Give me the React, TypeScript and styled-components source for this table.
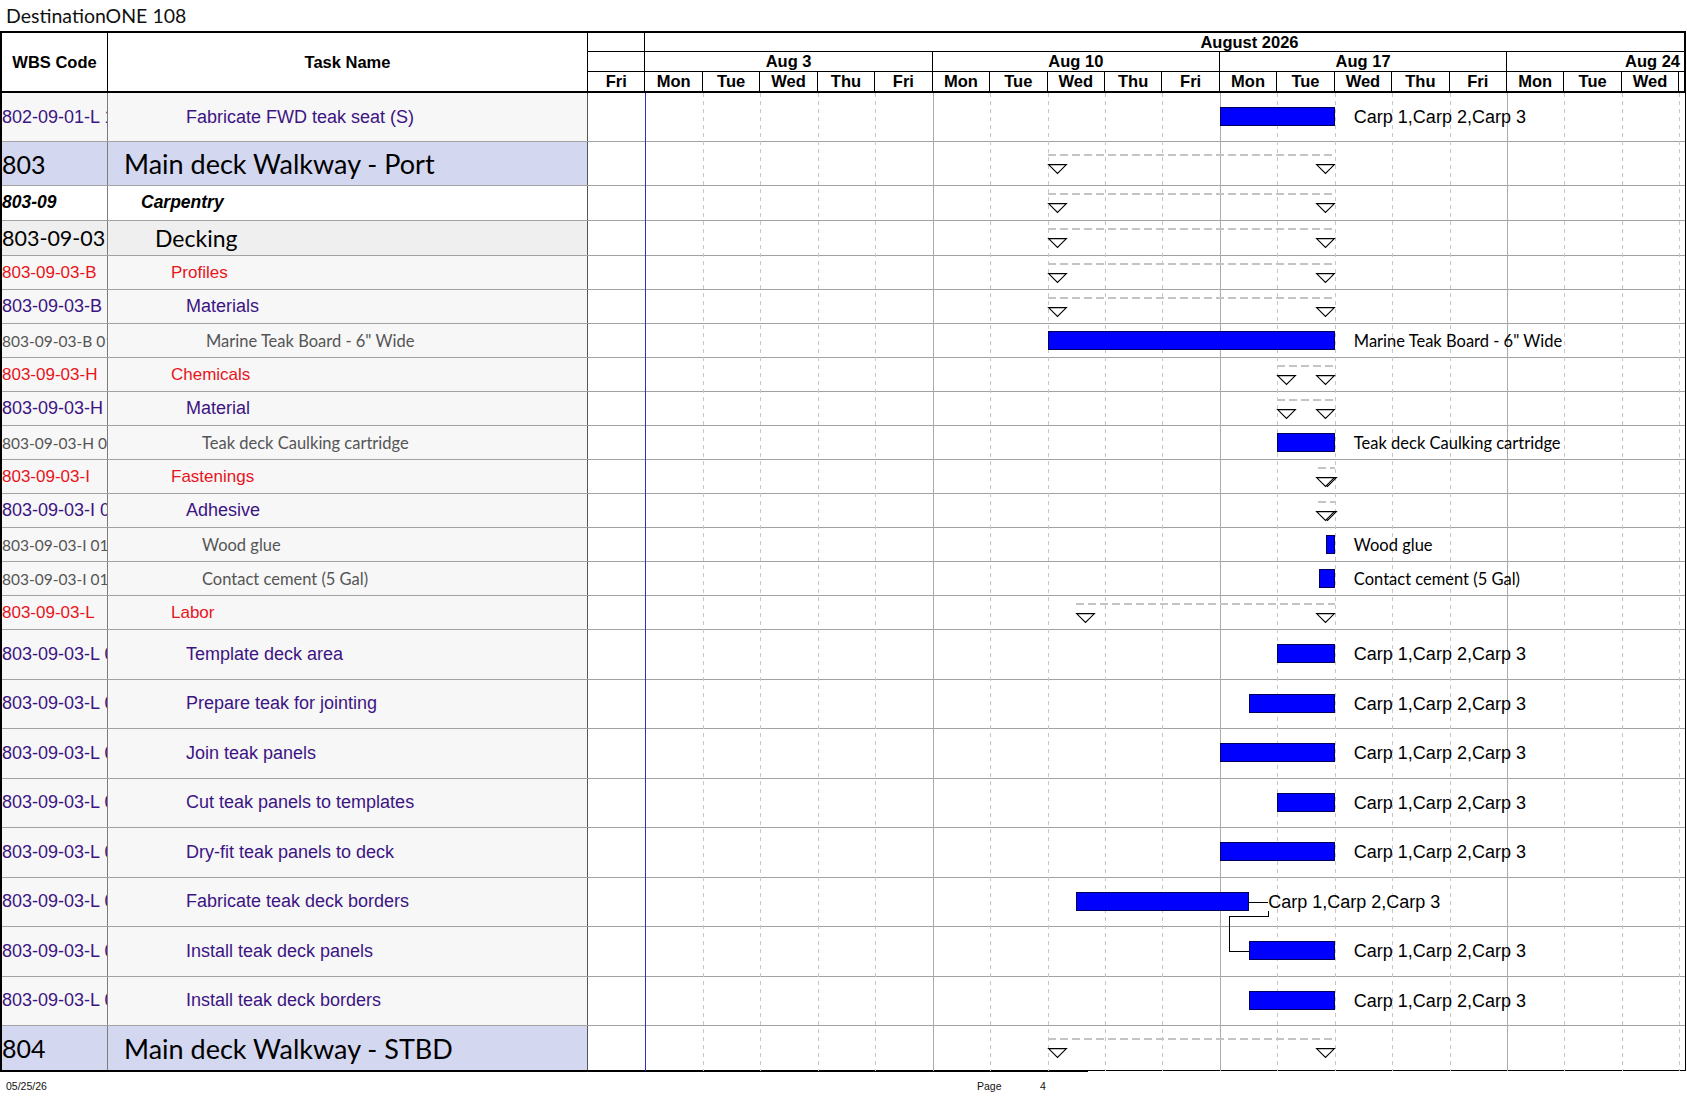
import React from 'react'
import styled, { createGlobalStyle } from 'styled-components'

const DAY = 57.45
const x = (d: number) => d * DAY

const GlobalStyle = createGlobalStyle`
  html, body {
    margin: 0;
    padding: 0;
    background: #fff;
  }
  body {
    width: 1687px;
    height: 1097px;
    overflow: hidden;
    font-family: 'Liberation Sans', Arial, sans-serif;
    color: #000;
  }
  * {
    box-sizing: border-box;
  }
`

const Page = styled.div`
  display: flex;
  flex-direction: column;
  width: 1687px;
`

const Title = styled.div`
  display: flex;
  align-items: center;
  height: 31px;
  padding-left: 6px;
  font-family: Lato, 'Noto Sans', sans-serif;
  font-size: 19.5px;
  color: #111;
`

const Table = styled.div`
  width: 1686px;
  border-top: 2px solid #000;
  border-left: 2px solid #000;
  border-right: 1px solid #000;
`

const Header = styled.div`
  display: flex;
  height: 60px;
  border-bottom: 2px solid #000;
`

const ColHead = styled.div<{ $w: number }>`
  display: flex;
  align-items: center;
  justify-content: center;
  width: ${p => p.$w}px;
  flex: none;
  border-right: 1px solid #000;
  font-weight: bold;
  font-size: 16.5px;
`

const GanttHead = styled.div`
  flex: 1;
  display: flex;
  flex-direction: column;
  overflow: hidden;
`

const Tier = styled.div<{ $h: number; $last?: boolean }>`
  display: flex;
  flex: none;
  height: ${p => p.$h}px;
  border-bottom: ${p => (p.$last ? 'none' : '1px solid #000')};
`

const TierCell = styled.div<{ $w?: number; $end?: boolean; $pad?: number }>`
  display: flex;
  align-items: center;
  justify-content: ${p => (p.$end ? 'flex-end' : p.$pad ? 'flex-start' : 'center')};
  flex: ${p => (p.$w ? 'none' : '1')};
  width: ${p => (p.$w ? `${p.$w}px` : 'auto')};
  padding: 0 ${p => (p.$end ? 4 : 0)}px 0 ${p => p.$pad ?? 0}px;
  border-right: 1px solid #000;
  font-weight: bold;
  font-size: 16.5px;
  white-space: nowrap;
`

const Body = styled.div`
  position: relative;
`

const DayGrid = styled.div`
  position: absolute;
  top: 0;
  bottom: 0;
  left: 586px;
  right: 0;
  display: flex;
  overflow: hidden;
  pointer-events: none;
`

type LineKind = 'none' | 'status' | 'week' | 'dash'

const DayColumn = styled.div<{ $kind: LineKind }>`
  flex: none;
  width: ${DAY}px;
  height: 100%;
  border-left: ${p =>
    p.$kind === 'status'
      ? '1px solid #2f2fb8'
      : p.$kind === 'week'
        ? '1px solid #ababab'
        : 'none'};
  background-image: ${p =>
    p.$kind === 'dash' ? 'linear-gradient(to bottom, #c6c6c6 50%, transparent 50%)' : 'none'};
  background-size: 1px 8px;
  background-repeat: repeat-y;
`

type RowKind = 'task' | 'section' | 'group' | 'sub' | 'cat' | 'item'

const rowBg: Record<RowKind, string> = {
  task: '#f7f7f7',
  section: '#d3d7ef',
  group: '#ffffff',
  sub: '#efefef',
  cat: '#f7f7f7',
  item: '#f7f7f7',
}

const Row = styled.div<{ $h: number; $last?: boolean }>`
  display: flex;
  height: ${p => p.$h}px;
  border-bottom: 1px solid ${p => (p.$last ? '#000' : '#a2a2a2')};
`

const textStyle = (kind: RowKind) => {
  switch (kind) {
    case 'section':
      return `font-family: Lato, 'Noto Sans', sans-serif; font-size: 27px; color: #000;`
    case 'sub':
      return `font-family: Lato, 'Noto Sans', sans-serif; font-size: 23px; color: #000;`
    case 'group':
      return `font-weight: bold; font-style: italic; font-size: 17.5px; color: #000;`
    case 'cat':
      return `font-size: 17px; color: #e8141c;`
    case 'item':
      return `font-family: Lato, 'Noto Sans', sans-serif; font-size: 16.5px; color: #555;`
    default:
      return `font-size: 18px; color: #3c1483;`
  }
}

const wbsSize: Partial<Record<RowKind, string>> = {
  section: '25px',
  sub: '21.5px',
  item: '15.5px',
}

const WbsCell = styled.div<{ $kind: RowKind }>`
  display: flex;
  align-items: center;
  flex: none;
  width: 106px;
  border-right: 1px solid #7c7c7c;
  background: ${p => rowBg[p.$kind]};
  white-space: nowrap;
  overflow: hidden;
  ${p => textStyle(p.$kind)}
  ${p => (wbsSize[p.$kind] ? `font-size: ${wbsSize[p.$kind]};` : '')}
`

const TaskCell = styled.div<{ $kind: RowKind; $indent: number }>`
  display: flex;
  align-items: center;
  flex: none;
  width: 480px;
  padding-left: ${p => p.$indent}px;
  border-right: 1px solid #555;
  background: ${p => rowBg[p.$kind]};
  white-space: nowrap;
  overflow: hidden;
  ${p => textStyle(p.$kind)}
`

const GanttCell = styled.div`
  position: relative;
  flex: 1;
`

const Bar = styled.div<{ $left: number; $width: number }>`
  position: absolute;
  top: 50%;
  left: ${p => p.$left}px;
  width: ${p => p.$width}px;
  height: 19px;
  margin-top: -10px;
  background: #0000ff;
  border: 1px solid #00005a;
`

const BarLabel = styled.span<{ $left: number; $font: 'arial' | 'lato' }>`
  position: absolute;
  top: 50%;
  left: ${p => p.$left}px;
  transform: translateY(-50%);
  white-space: nowrap;
  font-family: ${p => (p.$font === 'lato' ? "Lato, 'Noto Sans', sans-serif" : "'Liberation Sans', Arial, sans-serif")};
  font-size: ${p => (p.$font === 'lato' ? '16.5px' : '18px')};
  color: #000;
`

const SumLine = styled.div<{ $left: number; $width: number }>`
  position: absolute;
  top: calc(50% - 10px);
  left: ${p => p.$left}px;
  width: ${p => p.$width}px;
  height: 2px;
  background: repeating-linear-gradient(to right, #c4c4c4 0 8px, transparent 8px 12px);
`

const Tri = styled.svg<{ $left: number }>`
  position: absolute;
  top: 50%;
  left: ${p => p.$left}px;
  width: 19px;
  height: 10px;
  overflow: visible;
`

const LinkLayer = styled.svg`
  position: absolute;
  top: 0;
  left: 0;
  width: 100%;
  height: 80px;
  overflow: visible;
  pointer-events: none;
`

const BottomRule = styled.div`
  width: 1088px;
  height: 1px;
  background: #000;
`

const Footer = styled.div`
  display: grid;
  grid-template-columns: 971px 63px auto;
  padding: 8px 0 0 6px;
  font-size: 10.5px;
  line-height: 12px;
  color: #111;
`

type Gantt =
  | { type: 'bar'; from: number; to: number; label?: string; font?: 'arial' | 'lato'; linked?: boolean }
  | { type: 'sum'; from: number; to: number }

interface RowData {
  wbs: string
  name: string
  kind: RowKind
  indent: number
  h: number
  gantt: Gantt
}

const CARP = 'Carp 1,Carp 2,Carp 3'

const rows: RowData[] = [
  { wbs: '802-09-01-L 10', name: 'Fabricate FWD teak seat (S)', kind: 'task', indent: 78, h: 49, gantt: { type: 'bar', from: 11, to: 13, label: CARP } },
  { wbs: '803', name: 'Main deck Walkway - Port', kind: 'section', indent: 16, h: 44, gantt: { type: 'sum', from: 8, to: 13 } },
  { wbs: '803-09', name: 'Carpentry', kind: 'group', indent: 33, h: 34.5, gantt: { type: 'sum', from: 8, to: 13 } },
  { wbs: '803-09-03', name: 'Decking', kind: 'sub', indent: 47, h: 35.5, gantt: { type: 'sum', from: 8, to: 13 } },
  { wbs: '803-09-03-B', name: 'Profiles', kind: 'cat', indent: 63, h: 34, gantt: { type: 'sum', from: 8, to: 13 } },
  { wbs: '803-09-03-B 01', name: 'Materials', kind: 'task', indent: 78, h: 34, gantt: { type: 'sum', from: 8, to: 13 } },
  { wbs: '803-09-03-B 01-01', name: 'Marine Teak Board - 6" Wide', kind: 'item', indent: 98, h: 34, gantt: { type: 'bar', from: 8, to: 13, label: 'Marine Teak Board - 6" Wide', font: 'lato' } },
  { wbs: '803-09-03-H', name: 'Chemicals', kind: 'cat', indent: 63, h: 34, gantt: { type: 'sum', from: 12, to: 13 } },
  { wbs: '803-09-03-H 01', name: 'Material', kind: 'task', indent: 78, h: 34, gantt: { type: 'sum', from: 12, to: 13 } },
  { wbs: '803-09-03-H 01-01', name: 'Teak deck Caulking cartridge', kind: 'item', indent: 94, h: 34, gantt: { type: 'bar', from: 12, to: 13, label: 'Teak deck Caulking cartridge', font: 'lato' } },
  { wbs: '803-09-03-I', name: 'Fastenings', kind: 'cat', indent: 63, h: 34, gantt: { type: 'sum', from: 12.71, to: 13 } },
  { wbs: '803-09-03-I 01', name: 'Adhesive', kind: 'task', indent: 78, h: 34, gantt: { type: 'sum', from: 12.71, to: 13 } },
  { wbs: '803-09-03-I 01-01', name: 'Wood glue', kind: 'item', indent: 94, h: 34, gantt: { type: 'bar', from: 12.84, to: 13, label: 'Wood glue', font: 'lato' } },
  { wbs: '803-09-03-I 01-02', name: 'Contact cement (5 Gal)', kind: 'item', indent: 94, h: 34, gantt: { type: 'bar', from: 12.72, to: 13, label: 'Contact cement (5 Gal)', font: 'lato' } },
  { wbs: '803-09-03-L', name: 'Labor', kind: 'cat', indent: 63, h: 34, gantt: { type: 'sum', from: 8.5, to: 13 } },
  { wbs: '803-09-03-L 01', name: 'Template deck area', kind: 'task', indent: 78, h: 49.5, gantt: { type: 'bar', from: 12, to: 13, label: CARP } },
  { wbs: '803-09-03-L 02', name: 'Prepare teak for jointing', kind: 'task', indent: 78, h: 49.5, gantt: { type: 'bar', from: 11.5, to: 13, label: CARP } },
  { wbs: '803-09-03-L 03', name: 'Join teak panels', kind: 'task', indent: 78, h: 49.5, gantt: { type: 'bar', from: 11, to: 13, label: CARP } },
  { wbs: '803-09-03-L 04', name: 'Cut teak panels to templates', kind: 'task', indent: 78, h: 49.5, gantt: { type: 'bar', from: 12, to: 13, label: CARP } },
  { wbs: '803-09-03-L 05', name: 'Dry-fit teak panels to deck', kind: 'task', indent: 78, h: 49.5, gantt: { type: 'bar', from: 11, to: 13, label: CARP } },
  { wbs: '803-09-03-L 06', name: 'Fabricate teak deck borders', kind: 'task', indent: 78, h: 49.5, gantt: { type: 'bar', from: 8.5, to: 11.5, label: CARP, linked: true } },
  { wbs: '803-09-03-L 07', name: 'Install teak deck panels', kind: 'task', indent: 78, h: 49.5, gantt: { type: 'bar', from: 11.5, to: 13, label: CARP } },
  { wbs: '803-09-03-L 08', name: 'Install teak deck borders', kind: 'task', indent: 78, h: 49.5, gantt: { type: 'bar', from: 11.5, to: 13, label: CARP } },
  { wbs: '804', name: 'Main deck Walkway - STBD', kind: 'section', indent: 16, h: 45, gantt: { type: 'sum', from: 8, to: 13 } },
]

const days = ['Fri', 'Mon', 'Tue', 'Wed', 'Thu', 'Fri', 'Mon', 'Tue', 'Wed', 'Thu', 'Fri', 'Mon', 'Tue', 'Wed', 'Thu', 'Fri', 'Mon', 'Tue', 'Wed']
const weeks = ['Aug 3', 'Aug 10', 'Aug 17']

function lineKind(i: number): LineKind {
  if (i === 0) return 'none'
  if (i === 1) return 'status'
  if ((i - 1) % 5 === 0) return 'week'
  return 'dash'
}

function Triangle({ left }: { left: number }) {
  return (
    <Tri $left={left} viewBox="0 0 19 10">
      <polygon points="0.6,0.6 18.4,0.6 9.5,9.4" fill="#fff" stroke="#000" strokeWidth="1.1" />
    </Tri>
  )
}

function GanttItems({ g, h }: { g: Gantt; h: number }) {
  const left = x(g.from)
  const right = x(g.to)
  if (g.type === 'sum') {
    return (
      <>
        <SumLine $left={left} $width={right - left} />
        <Triangle left={left} />
        <Triangle left={right - 18.5} />
      </>
    )
  }
  const mid = h / 2
  return (
    <>
      <Bar $left={left} $width={right - left} />
      {g.label && (
        <BarLabel $left={g.linked ? right + 19.5 : right + 19} $font={g.font ?? 'arial'}>
          {g.label}
        </BarLabel>
      )}
      {g.linked && (
        <LinkLayer>
          <g stroke="#000" strokeWidth="1" fill="none" shapeRendering="crispEdges">
            <line x1={right} y1={mid} x2={right + 19.5} y2={mid} />
            <polyline points={`${right + 19.5},${mid + 9} ${right + 19.5},${mid + 14} ${right - 19.5},${mid + 14} ${right - 19.5},${h + 24.5} ${right},${h + 24.5}`} />
          </g>
        </LinkLayer>
      )}
    </>
  )
}

export default function App() {
  return (
    <Page>
      <GlobalStyle />
      <Title>DestinationONE 108</Title>
      <Table>
        <Header>
          <ColHead $w={106}>WBS Code</ColHead>
          <ColHead $w={480}>Task Name</ColHead>
          <GanttHead>
            <Tier $h={19}>
              <TierCell $w={DAY} />
              <TierCell $pad={555}>August 2026</TierCell>
            </Tier>
            <Tier $h={20}>
              <TierCell $w={DAY} />
              {weeks.map(w => (
                <TierCell key={w} $w={DAY * 5}>{w}</TierCell>
              ))}
              <TierCell $end>Aug 24</TierCell>
            </Tier>
            <Tier $h={19} $last>
              {days.map((d, i) => (
                <TierCell key={i} $w={DAY}>{d}</TierCell>
              ))}
              <TierCell />
            </Tier>
          </GanttHead>
        </Header>
        <Body>
          <DayGrid>
            {[...days, 'Thu'].map((_, i) => (
              <DayColumn key={i} $kind={lineKind(i)} />
            ))}
          </DayGrid>
          {rows.map((r, i) => (
            <Row key={i} $h={r.h} $last={i === rows.length - 1}>
              <WbsCell $kind={r.kind}>{r.wbs}</WbsCell>
              <TaskCell $kind={r.kind} $indent={r.indent}>{r.name}</TaskCell>
              <GanttCell>
                <GanttItems g={r.gantt} h={r.h - 1} />
              </GanttCell>
            </Row>
          ))}
        </Body>
      </Table>
      <BottomRule />
      <Footer>
        <span>05/25/26</span>
        <span>Page</span>
        <span>4</span>
      </Footer>
    </Page>
  )
}
